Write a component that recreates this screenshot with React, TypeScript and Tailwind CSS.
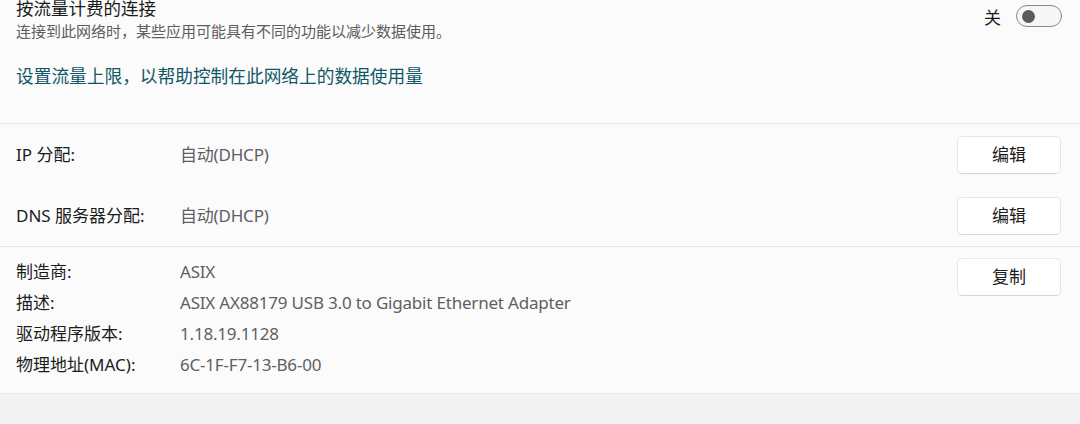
import React from "react";

const font = {
  fontFamily: '"Noto Sans", "Noto Sans CJK SC", sans-serif',
};

function Toggle() {
  return (
    <div className="w-[46px] h-[22px] rounded-full border border-[#8a8a8a] bg-[#f6f6f6] flex items-center pl-[5px]">
      <div className="w-[13px] h-[13px] rounded-full bg-[#5b5b5b]" />
    </div>
  );
}

function ActionButton({ label }: { label: string }) {
  return (
    <button className="w-[104px] h-[38px] rounded-[5px] bg-white border border-[#e6e6e6] border-b-[#d4d4d4] text-[17px] text-[#1b1b1b] flex items-center justify-center">
      {label}
    </button>
  );
}

function SettingRow({ label, value, action }: { label: string; value: string; action: string }) {
  return (
    <div className="h-[61px] flex items-center pl-4 pr-[19px]">
      <div className="w-[164px] text-[17px] text-[#1b1b1b]">{label}</div>
      <div className="text-[17px] text-[#5f5f5f] tracking-[-0.2px]">{value}</div>
      <div className="ml-auto">
        <ActionButton label={action} />
      </div>
    </div>
  );
}

const details = [
  { label: "制造商:", value: "ASIX" },
  { label: "描述:", value: "ASIX AX88179 USB 3.0 to Gigabit Ethernet Adapter" },
  { label: "驱动程序版本:", value: "1.18.19.1128" },
  { label: "物理地址(MAC):", value: "6C-1F-F7-13-B6-00" },
];

export default function App() {
  return (
    <div className="w-[1080px] h-[424px] bg-[#f3f3f3] overflow-hidden" style={font}>
      {/* Metered connection */}
      <section className="h-[123px] bg-[#fbfbfb] pl-4 pr-[18px]">
        <div className="flex justify-between">
          <div className="-mt-[4px]">
            <div className="text-[17.5px] leading-[24px] text-[#1a1a1a]">按流量计费的连接</div>
            <div className="text-[15px] leading-[20px] text-[#5d5d5d] mt-[1px]">
              连接到此网络时，某些应用可能具有不同的功能以减少数据使用。
            </div>
          </div>
          <div className="flex items-center gap-[15px] h-[22px] mt-[5px]">
            <span className="text-[17px] text-[#1b1b1b] mt-[4px]">关</span>
            <Toggle />
          </div>
        </div>
        <div className="mt-[23px] text-[17.7px] leading-[24px] text-[#0f5765]">
          设置流量上限，以帮助控制在此网络上的数据使用量
        </div>
      </section>

      {/* IP / DNS */}
      <section className="bg-[#fbfbfb] border-t border-[#e9e9e9]">
        <SettingRow label="IP 分配:" value="自动(DHCP)" action="编辑" />
        <SettingRow label="DNS 服务器分配:" value="自动(DHCP)" action="编辑" />
      </section>

      {/* Adapter details */}
      <section className="bg-[#fbfbfb] border-t border-b border-[#e9e9e9] flex pl-4 pr-[19px] pb-[13px]">
        <div className="pt-[9px]">
          {details.map((d) => (
            <div key={d.label} className="flex h-[31px] items-center">
              <div className="w-[164px] text-[17px] text-[#1b1b1b]">{d.label}</div>
              <div className="text-[17px] text-[#5f5f5f] tracking-[-0.2px]">{d.value}</div>
            </div>
          ))}
        </div>
        <div className="ml-auto mt-[11px]">
          <ActionButton label="复制" />
        </div>
      </section>
    </div>
  );
}
